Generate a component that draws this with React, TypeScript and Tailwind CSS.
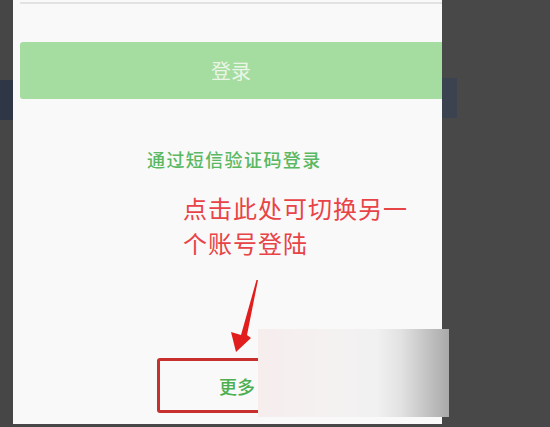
import React from "react";

export default function App() {
  const cjk = { fontFamily: '"Noto Sans CJK SC", "Noto Sans", sans-serif' };
  return (
    <div className="w-[550px] h-[427px] bg-[#474747] flex overflow-hidden" style={cjk}>
      {/* left dark strip */}
      <div className="w-[13px] h-full flex flex-col">
        <div className="h-[80px] bg-[#464646]" />
        <div className="h-[40px] bg-[#2f3746]" />
        <div className="flex-1 bg-[#464646]" />
      </div>

      {/* main panel */}
      <div className="relative w-[429px] h-[424px] bg-[#f9f9f9] flex flex-col">
        <div className="mt-[2px] ml-[7px] h-[2px] bg-[#e2e2e2]" />
        <div className="mt-[38px] ml-[7px] h-[57px] bg-[#a5dc9f] rounded-l-[3px] flex items-center justify-center">
          <span className="text-[20px] text-[#e9f6e6] leading-none">登录</span>
        </div>
        <div className="mt-[47px] ml-[134px] text-[18px] leading-[27px] tracking-[1.4px] font-medium text-[#5ab862]">
          通过短信验证码登录
        </div>
        <div className="mt-[17px] ml-[170px] w-[240px] text-[24px] leading-[35px] tracking-[1px] text-[#e84346]">
          点击此处可切换另一个账号登陆
        </div>
        <svg className="mt-[18px] ml-[215px]" width="32" height="76" viewBox="0 0 32 76">
          <polygon points="30,2 19,57 23,60 8,74 3,54 13,57 28.5,2" fill="#e11d1d" />
        </svg>
        <div className="mt-[4px] ml-[144px] w-[156px] h-[55px] border-[3px] border-[#c8302e] rounded-[3px] flex items-center justify-center">
          <span className="ml-[4px] text-[18px] leading-none font-medium text-[#4caf50]">更多</span>
        </div>

        {/* blurred overlay box */}
        <div className="absolute left-[245px] top-[329px] w-[191px] h-[88px] bg-[linear-gradient(to_right,#f6eded_0%,#f5f1f1_35%,#f1f1f1_62%,#e2e2e2_75%,#a9a9a9_100%)]" />
      </div>

      {/* right dark region */}
      <div className="flex-1 h-full flex flex-col bg-[#484848]">
        <div className="h-[78px]" />
        <div className="w-[15px] h-[40px] bg-[#3b4350]" />
      </div>
    </div>
  );
}
